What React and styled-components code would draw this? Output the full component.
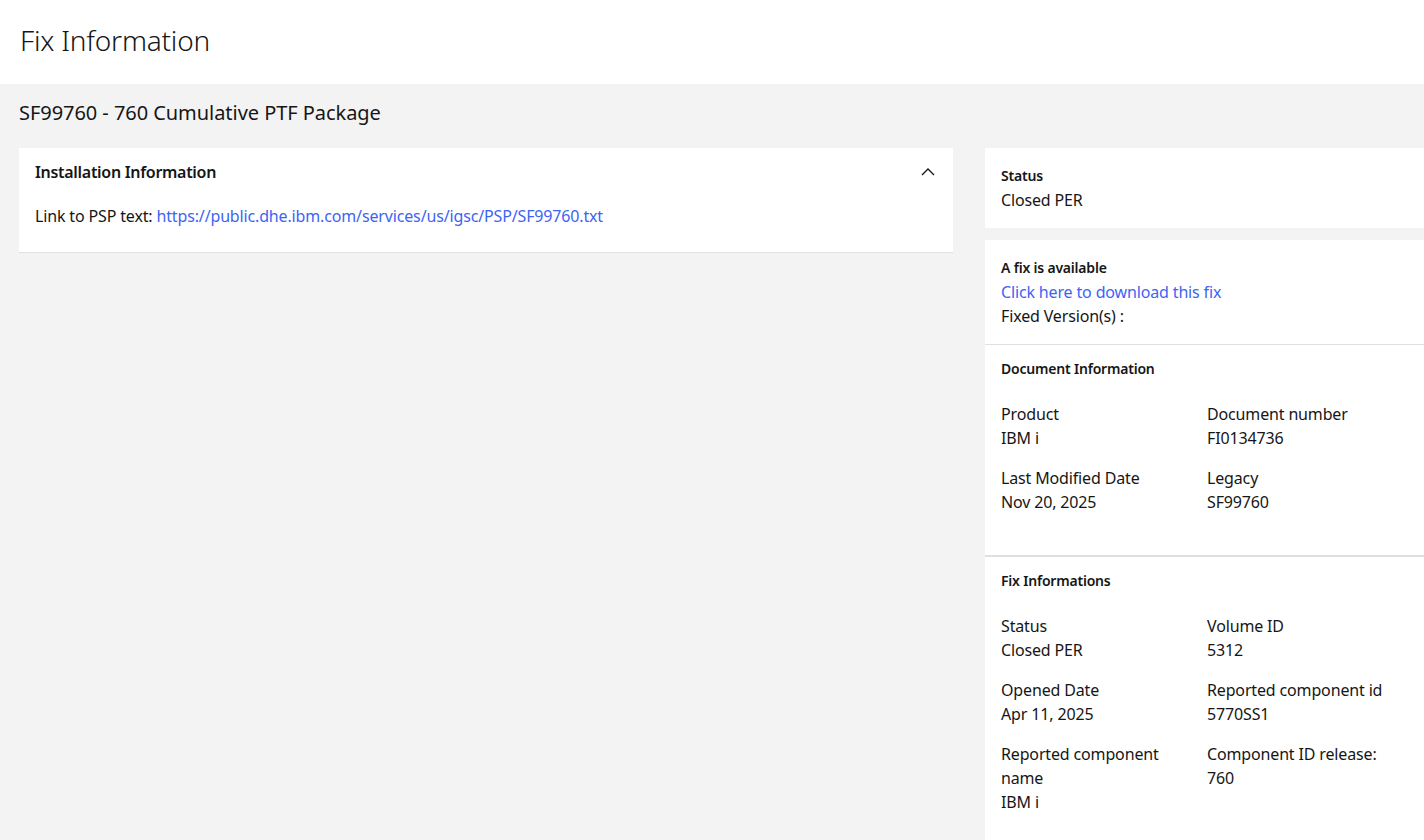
import React from "react";
import styled, { createGlobalStyle } from "styled-components";

const Global = createGlobalStyle`
  html, body { margin: 0; padding: 0; }
  body {
    background: #f3f3f3;
    font-family: "Noto Sans", "Open Sans", Arial, sans-serif;
    color: #161616;
    overflow: hidden;
  }
  * { box-sizing: border-box; }
`;

const Page = styled.div`
  width: 1424px;
  min-height: 840px;
  background: #f3f3f3;
  overflow: hidden;
`;

const Header = styled.header`
  height: 84px;
  background: #ffffff;
  display: flex;
  align-items: center;
  padding-left: 20px;
`;

const Title = styled.h1`
  margin: 0;
  font-size: 28px;
  font-weight: 300;
  line-height: 36px;
  letter-spacing: -0.2px;
  color: #161616;
  position: relative;
  top: -2px;
`;

const Main = styled.main`
  padding: 0 0 0 19px;
`;

const Subtitle = styled.h2`
  margin: 0;
  font-size: 20px;
  font-weight: 400;
  line-height: 28px;
  letter-spacing: -0.05px;
  padding: 15px 0 21px;
  color: #161616;
`;

const Columns = styled.div`
  display: flex;
  gap: 32px;
  align-items: flex-start;
`;

const LeftCol = styled.div`
  flex: 0 0 934px;
`;

const RightCol = styled.aside`
  flex: 0 0 439px;
  display: flex;
  flex-direction: column;
  gap: 12px;
`;

const Accordion = styled.section`
  background: #ffffff;
  border-bottom: 1px solid #e0e0e0;
`;

const AccordionHead = styled.div`
  height: 48px;
  display: flex;
  align-items: center;
  justify-content: space-between;
  padding: 0 17px 0 16px;
`;

const AccordionTitle = styled.span`
  font-size: 16px;
  font-weight: 600;
  line-height: 20px;
  letter-spacing: -0.3px;
`;

const AccordionBody = styled.div`
  padding: 8px 16px 24px;
  font-size: 16px;
  line-height: 24px;
  letter-spacing: -0.15px;
`;

const Link = styled.a`
  color: #3d64f4;
  text-decoration: none;
`;

const Card = styled.div`
  background: #ffffff;
  padding: ${(p) => p.$pad || "18px 16px 16px"};
  border-bottom: ${(p) => p.$border || "none"};
`;

const Stack = styled.div`
  display: flex;
  flex-direction: column;
`;

const Group = styled.div`
  display: flex;
  flex-direction: column;
  padding-right: 16px;
`;

const Label = styled.div`
  font-size: 14px;
  font-weight: 600;
  line-height: 20px;
  letter-spacing: -0.2px;
  margin-bottom: 2px;
`;

const Text = styled.div`
  font-size: 16px;
  line-height: 24px;
  letter-spacing: -0.15px;
`;

const SectionTitle = styled.div`
  font-size: 14px;
  font-weight: 600;
  line-height: 20px;
  letter-spacing: -0.2px;
  margin-bottom: 23px;
`;

const Grid = styled.div`
  display: grid;
  grid-template-columns: 206px 206px;
  row-gap: 16px;
`;

const Chevron = () => (
  <svg width="16" height="16" viewBox="0 0 16 16" fill="none">
    <path d="M2 11 L8 5 L14 11" stroke="#161616" strokeWidth="1.3" />
  </svg>
);

const Field = ({ label, value }) => (
  <Group>
    <Text>{label}</Text>
    <Text>{value}</Text>
  </Group>
);

export default function App() {
  return (
    <Page>
      <Global />
      <Header>
        <Title>Fix Information</Title>
      </Header>
      <Main>
        <Subtitle>SF99760 - 760 Cumulative PTF Package</Subtitle>
        <Columns>
          <LeftCol>
            <Accordion>
              <AccordionHead>
                <AccordionTitle>Installation Information</AccordionTitle>
                <Chevron />
              </AccordionHead>
              <AccordionBody>
                Link to PSP text:{" "}
                <Link href="#">https://public.dhe.ibm.com/services/us/igsc/PSP/SF99760.txt</Link>
              </AccordionBody>
            </Accordion>
          </LeftCol>
          <RightCol>
            <Card>
              <Label>Status</Label>
              <Text>Closed PER</Text>
            </Card>
            <Stack>
              <Card $border="1px solid #e0e0e0">
                <Label>A fix is available</Label>
                <Text>
                  <Link href="#">Click here to download this fix</Link>
                </Text>
                <Text>Fixed Version(s) :</Text>
              </Card>
              <Card $pad="14px 16px 41px" $border="2px solid #e0e0e0">
                <SectionTitle>Document Information</SectionTitle>
                <Grid>
                  <Field label="Product" value="IBM i" />
                  <Field label="Document number" value="FI0134736" />
                  <Field label="Last Modified Date" value="Nov 20, 2025" />
                  <Field label="Legacy" value="SF99760" />
                </Grid>
              </Card>
              <Card $pad="14px 16px 40px">
                <SectionTitle>Fix Informations</SectionTitle>
                <Grid>
                  <Field label="Status" value="Closed PER" />
                  <Field label="Volume ID" value="5312" />
                  <Field label="Opened Date" value="Apr 11, 2025" />
                  <Field label="Reported component id" value="5770SS1" />
                  <Field label="Reported component name" value="IBM i" />
                  <Field label="Component ID release:" value="760" />
                </Grid>
              </Card>
            </Stack>
          </RightCol>
        </Columns>
      </Main>
    </Page>
  );
}
